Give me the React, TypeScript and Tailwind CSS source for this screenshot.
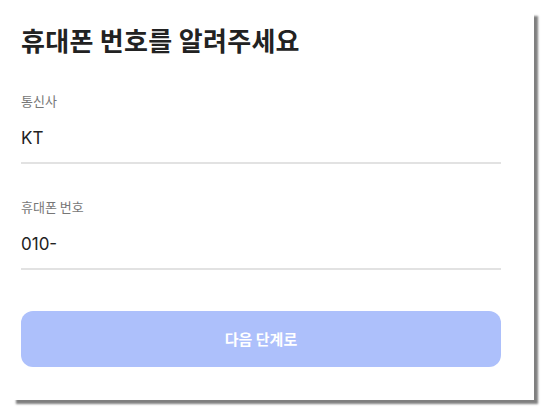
export default function App() {
  return (
    <div className="min-h-screen bg-white" style={{ fontFamily: '"Noto Sans CJK KR", "Noto Sans", sans-serif' }}>
      <div className="w-[534px] bg-white px-[21px] pt-6 pb-[33px] shadow-[10px_10px_2px_-6px_rgba(0,0,0,0.5)]">
        <h1 className="text-[26px] leading-8 font-bold tracking-[0.3px] text-[#222]">휴대폰 번호를 알려주세요</h1>

        <div className="mt-[35px] w-[480px]">
          <label className="block h-5 text-[13px] leading-5 text-[#777]">통신사</label>
          <input
            readOnly
            defaultValue="KT"
            className="mt-[15px] block w-full border-b-2 border-[#e2e2e2] pb-3 font-['Inter'] text-[17px] leading-6 text-[#222] outline-none"
          />
        </div>

        <div className="mt-[33px] w-[480px]">
          <label className="block h-5 text-[13px] leading-5 text-[#777]">휴대폰 번호</label>
          <input
            readOnly
            defaultValue="010-"
            className="mt-[15px] block w-full border-b-2 border-[#e2e2e2] pb-3 font-['Inter'] text-[17px] leading-6 text-[#222] outline-none"
          />
        </div>

        <button
          type="button"
          className="mt-[41px] flex h-14 w-[480px] items-center justify-center rounded-xl bg-[#adc0fb] text-[15px] font-bold text-white"
        >
          다음 단계로
        </button>
      </div>
    </div>
  )
}
